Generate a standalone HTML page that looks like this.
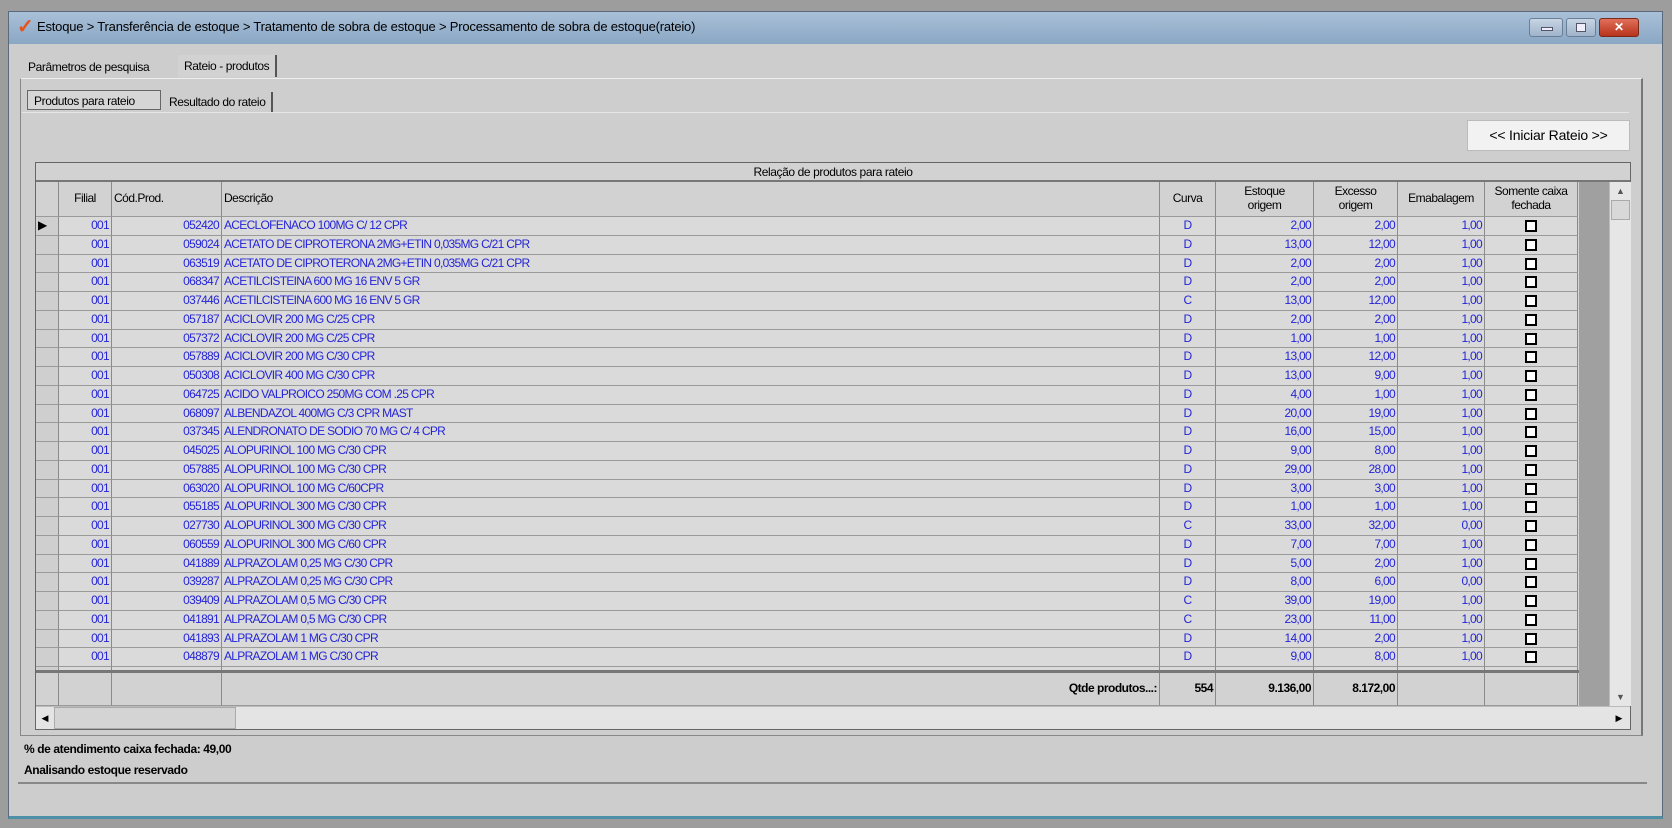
<!DOCTYPE html>
<html><head><meta charset="utf-8"><style>
*{box-sizing:border-box;margin:0;padding:0}
body{width:1672px;height:828px;background:#9d9d9d;font-family:"Liberation Sans",sans-serif;font-size:12px;color:#000;position:relative;overflow:hidden}
.win{position:absolute;left:8px;top:11px;width:1655px;height:808px;background:#cdcdcd;border:1px solid #5a6a7a;border-bottom:3px solid #4d8fa6}
.title{position:absolute;left:0;top:0;right:0;height:32px;background:linear-gradient(#a9c0d8,#8aa7c4);font-size:13px;line-height:30px;padding-left:28px;letter-spacing:-.2px}
.chk{position:absolute;left:8px;top:5px;color:#e5531a;font-weight:bold;font-size:20px;line-height:20px}
.wb{position:absolute;top:6px;height:19px;border:1px solid #6a7f96;border-radius:3px;background:linear-gradient(#c7d5e4,#9fb3ca)}
.abs{position:absolute}
.tab{position:absolute;font-size:12px;letter-spacing:-.4px}
.panel{position:absolute;border:1px solid #888;border-right:2px solid #777;background:#cecece}
.btn{position:absolute;left:1467px;top:120px;width:163px;height:31px;background:#f2f2f2;border:1px solid #bbb;font-size:14px;line-height:29px;text-align:center;letter-spacing:-.2px}
.grid{position:absolute;left:35px;top:162px;width:1596px;height:568px;border:1px solid #666;background:#d4d4d4}
.band{position:absolute;left:0;top:0;width:1594px;height:19px;border-bottom:2px solid #777;text-align:center;line-height:18px;font-size:12px;letter-spacing:-.4px;background:#d2d2d2}
.row{position:absolute;left:0;display:grid;grid-template-columns:23px 53px 110px 938px 56px 98px 84px 87px 93px;height:18.75px}
.row div{border-right:1px solid #8a8a8a;border-bottom:1px solid #9a9a9a;white-space:nowrap;overflow:hidden;line-height:17px;padding:0 2px;letter-spacing:-.7px;color:#2424d8;background:#dadada}
.row div:first-child{background:#cfcfcf}
.r{text-align:right}.c{text-align:center}
.hd div{color:#000;background:#d2d2d2!important;letter-spacing:-.5px;line-height:14px;font-size:12px}
.cb{display:inline-block;width:12px;height:12px;border:2px solid #000;background:#fff;margin-top:3px}
</style></head><body>
<div class="win">
<div class="title"><span class="chk">✓</span>Estoque &gt; Transferência de estoque &gt; Tratamento de sobra de estoque &gt; Processamento de sobra de estoque(rateio)</div>
<div class="wb" style="left:1520px;width:34px"><div class="abs" style="left:11px;top:8px;width:12px;height:4px;background:#eef;border:1px solid #556"></div></div>
<div class="wb" style="left:1557px;width:30px"><div class="abs" style="left:9px;top:4px;width:10px;height:9px;border:1px solid #556;background:#eef"></div></div>
<div class="wb" style="left:1590px;width:40px;background:linear-gradient(#e0705a,#b8321c);border-color:#7a2a1a;color:#fff;text-align:center;font-weight:bold;line-height:17px">✕</div>
</div>
<div class="tab" style="left:28px;top:60px">Parâmetros de pesquisa</div>
<div class="tab" style="left:178px;top:55px;height:22px;padding:4px 6px;border-right:2px solid #555;background:#d2d2d2">Rateio - produtos</div>
<div class="panel" style="left:20px;top:78px;width:1623px;height:658px;border-top:1px solid #eee"></div>
<div class="tab" style="left:27px;top:90px;height:20px;width:134px;border:1px solid #666;padding:3px 6px;background:#d6d6d6">Produtos para rateio</div>
<div class="tab" style="left:163px;top:92px;height:20px;padding:3px 6px;border-right:2px solid #555">Resultado do rateio</div>
<div class="abs" style="left:22px;top:112px;width:1607px;border-top:1px solid #e6e6e6"></div>
<div class="btn">&lt;&lt; Iniciar Rateio &gt;&gt;</div>
<div class="grid">
<div class="band">Relação de produtos para rateio</div>
<div class="row hd" style="top:19px;height:35px"><div></div><div class="c" style="line-height:33px">Filial</div><div style="line-height:33px">Cód.Prod.</div><div style="line-height:33px">Descrição</div><div class="c" style="line-height:33px">Curva</div><div class="c" style="padding-top:2px">Estoque<br>origem</div><div class="c" style="padding-top:2px">Excesso<br>origem</div><div class="c" style="line-height:33px">Emabalagem</div><div class="c" style="padding-top:2px">Somente caixa<br>fechada</div></div>
<div class="row" style="top:54px"><div style="color:#000">▶</div><div class="r">001</div><div class="r">052420</div><div>ACECLOFENACO 100MG C/ 12 CPR</div><div class="c">D</div><div class="r">2,00</div><div class="r">2,00</div><div class="r">1,00</div><div class="c"><span class="cb"></span></div></div>
<div class="row" style="top:72.75px"><div></div><div class="r">001</div><div class="r">059024</div><div>ACETATO DE CIPROTERONA 2MG+ETIN 0,035MG C/21 CPR</div><div class="c">D</div><div class="r">13,00</div><div class="r">12,00</div><div class="r">1,00</div><div class="c"><span class="cb"></span></div></div>
<div class="row" style="top:91.5px"><div></div><div class="r">001</div><div class="r">063519</div><div>ACETATO DE CIPROTERONA 2MG+ETIN 0,035MG C/21 CPR</div><div class="c">D</div><div class="r">2,00</div><div class="r">2,00</div><div class="r">1,00</div><div class="c"><span class="cb"></span></div></div>
<div class="row" style="top:110.25px"><div></div><div class="r">001</div><div class="r">068347</div><div>ACETILCISTEINA 600 MG 16 ENV 5 GR</div><div class="c">D</div><div class="r">2,00</div><div class="r">2,00</div><div class="r">1,00</div><div class="c"><span class="cb"></span></div></div>
<div class="row" style="top:129px"><div></div><div class="r">001</div><div class="r">037446</div><div>ACETILCISTEINA 600 MG 16 ENV 5 GR</div><div class="c">C</div><div class="r">13,00</div><div class="r">12,00</div><div class="r">1,00</div><div class="c"><span class="cb"></span></div></div>
<div class="row" style="top:147.75px"><div></div><div class="r">001</div><div class="r">057187</div><div>ACICLOVIR 200 MG C/25 CPR</div><div class="c">D</div><div class="r">2,00</div><div class="r">2,00</div><div class="r">1,00</div><div class="c"><span class="cb"></span></div></div>
<div class="row" style="top:166.5px"><div></div><div class="r">001</div><div class="r">057372</div><div>ACICLOVIR 200 MG C/25 CPR</div><div class="c">D</div><div class="r">1,00</div><div class="r">1,00</div><div class="r">1,00</div><div class="c"><span class="cb"></span></div></div>
<div class="row" style="top:185.25px"><div></div><div class="r">001</div><div class="r">057889</div><div>ACICLOVIR 200 MG C/30 CPR</div><div class="c">D</div><div class="r">13,00</div><div class="r">12,00</div><div class="r">1,00</div><div class="c"><span class="cb"></span></div></div>
<div class="row" style="top:204px"><div></div><div class="r">001</div><div class="r">050308</div><div>ACICLOVIR 400 MG C/30 CPR</div><div class="c">D</div><div class="r">13,00</div><div class="r">9,00</div><div class="r">1,00</div><div class="c"><span class="cb"></span></div></div>
<div class="row" style="top:222.75px"><div></div><div class="r">001</div><div class="r">064725</div><div>ACIDO VALPROICO 250MG COM .25 CPR</div><div class="c">D</div><div class="r">4,00</div><div class="r">1,00</div><div class="r">1,00</div><div class="c"><span class="cb"></span></div></div>
<div class="row" style="top:241.5px"><div></div><div class="r">001</div><div class="r">068097</div><div>ALBENDAZOL 400MG C/3 CPR MAST</div><div class="c">D</div><div class="r">20,00</div><div class="r">19,00</div><div class="r">1,00</div><div class="c"><span class="cb"></span></div></div>
<div class="row" style="top:260.25px"><div></div><div class="r">001</div><div class="r">037345</div><div>ALENDRONATO DE SODIO 70 MG C/ 4 CPR</div><div class="c">D</div><div class="r">16,00</div><div class="r">15,00</div><div class="r">1,00</div><div class="c"><span class="cb"></span></div></div>
<div class="row" style="top:279px"><div></div><div class="r">001</div><div class="r">045025</div><div>ALOPURINOL 100 MG C/30 CPR</div><div class="c">D</div><div class="r">9,00</div><div class="r">8,00</div><div class="r">1,00</div><div class="c"><span class="cb"></span></div></div>
<div class="row" style="top:297.75px"><div></div><div class="r">001</div><div class="r">057885</div><div>ALOPURINOL 100 MG C/30 CPR</div><div class="c">D</div><div class="r">29,00</div><div class="r">28,00</div><div class="r">1,00</div><div class="c"><span class="cb"></span></div></div>
<div class="row" style="top:316.5px"><div></div><div class="r">001</div><div class="r">063020</div><div>ALOPURINOL 100 MG C/60CPR</div><div class="c">D</div><div class="r">3,00</div><div class="r">3,00</div><div class="r">1,00</div><div class="c"><span class="cb"></span></div></div>
<div class="row" style="top:335.25px"><div></div><div class="r">001</div><div class="r">055185</div><div>ALOPURINOL 300 MG C/30 CPR</div><div class="c">D</div><div class="r">1,00</div><div class="r">1,00</div><div class="r">1,00</div><div class="c"><span class="cb"></span></div></div>
<div class="row" style="top:354px"><div></div><div class="r">001</div><div class="r">027730</div><div>ALOPURINOL 300 MG C/30 CPR</div><div class="c">C</div><div class="r">33,00</div><div class="r">32,00</div><div class="r">0,00</div><div class="c"><span class="cb"></span></div></div>
<div class="row" style="top:372.75px"><div></div><div class="r">001</div><div class="r">060559</div><div>ALOPURINOL 300 MG C/60 CPR</div><div class="c">D</div><div class="r">7,00</div><div class="r">7,00</div><div class="r">1,00</div><div class="c"><span class="cb"></span></div></div>
<div class="row" style="top:391.5px"><div></div><div class="r">001</div><div class="r">041889</div><div>ALPRAZOLAM 0,25 MG C/30 CPR</div><div class="c">D</div><div class="r">5,00</div><div class="r">2,00</div><div class="r">1,00</div><div class="c"><span class="cb"></span></div></div>
<div class="row" style="top:410.25px"><div></div><div class="r">001</div><div class="r">039287</div><div>ALPRAZOLAM 0,25 MG C/30 CPR</div><div class="c">D</div><div class="r">8,00</div><div class="r">6,00</div><div class="r">0,00</div><div class="c"><span class="cb"></span></div></div>
<div class="row" style="top:429px"><div></div><div class="r">001</div><div class="r">039409</div><div>ALPRAZOLAM 0,5 MG C/30 CPR</div><div class="c">C</div><div class="r">39,00</div><div class="r">19,00</div><div class="r">1,00</div><div class="c"><span class="cb"></span></div></div>
<div class="row" style="top:447.75px"><div></div><div class="r">001</div><div class="r">041891</div><div>ALPRAZOLAM 0,5 MG C/30 CPR</div><div class="c">C</div><div class="r">23,00</div><div class="r">11,00</div><div class="r">1,00</div><div class="c"><span class="cb"></span></div></div>
<div class="row" style="top:466.5px"><div></div><div class="r">001</div><div class="r">041893</div><div>ALPRAZOLAM 1 MG C/30 CPR</div><div class="c">D</div><div class="r">14,00</div><div class="r">2,00</div><div class="r">1,00</div><div class="c"><span class="cb"></span></div></div>
<div class="row" style="top:485.25px"><div></div><div class="r">001</div><div class="r">048879</div><div>ALPRAZOLAM 1 MG C/30 CPR</div><div class="c">D</div><div class="r">9,00</div><div class="r">8,00</div><div class="r">1,00</div><div class="c"><span class="cb"></span></div></div>
<div class="row" style="top:504px;height:4px"><div></div><div></div><div></div><div></div><div></div><div></div><div></div><div></div><div></div></div>
<div class="abs" style="left:0;top:507px;width:1543px;height:3px;background:#777"></div>
<div class="row hd" style="top:510px;height:33px;font-weight:bold"><div></div><div></div><div></div><div class="r" style="line-height:30px;font-weight:bold">Qtde produtos...:</div><div class="r" style="line-height:30px;font-weight:bold">554</div><div class="r" style="line-height:30px;font-weight:bold">9.136,00</div><div class="r" style="line-height:30px;font-weight:bold">8.172,00</div><div></div><div></div></div>
<div class="abs" style="left:1543px;top:19px;width:30px;height:524px;background:#a0a0a0"></div>
<div class="abs" style="left:1573px;top:19px;width:22px;height:524px;background:#e6e6e6;border-left:1px solid #bbb"><div style="text-align:center;font-size:9px;color:#555;margin-top:4px">▲</div><div style="margin:4px 1px;height:20px;background:#d8d8d8;border:1px solid #aaa"></div><div style="position:absolute;bottom:4px;width:100%;text-align:center;font-size:9px;color:#555">▼</div></div>
<div class="abs" style="left:0;top:543px;width:1594px;height:23px;background:#e4e4e4;border-top:1px solid #bbb"><div class="abs" style="left:0;top:0;width:18px;height:22px;font-size:9px;line-height:22px;text-align:center">◀</div><div class="abs" style="left:18px;top:0;width:182px;height:22px;background:#d4d4d4;border:1px solid #aaa"></div><div class="abs" style="right:2px;top:0;width:18px;height:22px;font-size:9px;line-height:22px;text-align:center">▶</div></div>
</div>
<div class="abs" style="left:24px;top:742px;font-weight:bold;letter-spacing:-.4px">% de atendimento caixa fechada: 49,00</div>
<div class="abs" style="left:24px;top:763px;font-weight:bold;letter-spacing:-.4px">Analisando estoque reservado</div>
<div class="abs" style="left:18px;top:782px;width:1629px;height:2px;background:#888"></div>
</body></html>
